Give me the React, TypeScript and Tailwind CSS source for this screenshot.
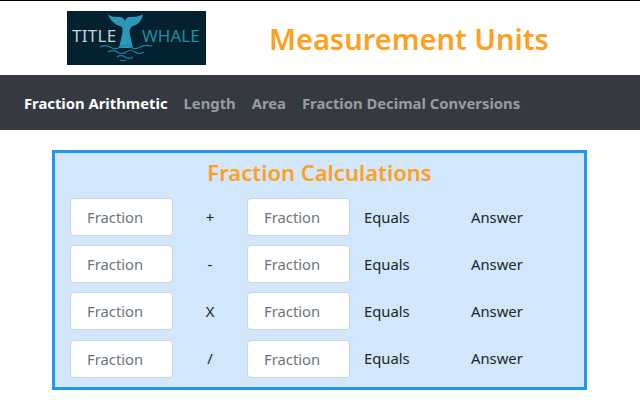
const font = { fontFamily: '"Noto Sans", "Open Sans", sans-serif' };

const rows = ["+", "-", "X", "/"];

function Logo() {
  return (
    <div className="relative w-[139px] h-[54px] bg-[#04212f] overflow-hidden">
      <svg viewBox="0 0 139 54" className="absolute inset-0 w-full h-full">
        <path
          d="M41 3c2 6 6 10 12 12 3 1 3 5 2 9l-3 13h14l-3-13c-1-4 0-8 3-9 6-2 9-6 10-12-4 3-10 3-14 3-2 0-3 2-4 4-1-2-3-4-5-4-5 0-9 0-12-3z"
          fill="#2a9ab8"
        />
        <path
          d="M33 36c4-2 7-2 10 0s7 2 10 0 7-2 10 0 7 2 10 0 7-2 12-1M41 41c4-2 6-2 9 0s6 2 9 0 6-2 9 0 6 2 9 0M50 46c3-2 5-2 8 0s5 2 8 0M53 49c2 1 4 1 6 0"
          stroke="#1b87a6"
          strokeWidth="1.2"
          fill="none"
        />
      </svg>
      <span className="absolute left-[5px] top-[13px] text-[17px] leading-[24px] text-[#c9d2d6] tracking-[0.3px]">
        TITLE
      </span>
      <span className="absolute left-[75px] top-[13px] text-[17px] leading-[24px] text-[#1f8ea3]">
        WHALE
      </span>
    </div>
  );
}

function Field() {
  return (
    <input
      placeholder="Fraction"
      className="w-[103px] h-[38px] shrink-0 bg-white rounded border border-[#ced4da] px-4 text-[14.8px] placeholder:text-[#6c757d] outline-none"
    />
  );
}

export default function App() {
  return (
    <div style={font} className="w-[640px] h-[400px] overflow-hidden bg-white border-t border-black">
      <header className="h-[74px] flex items-center pl-[67px]">
        <Logo />
        <h1 className="ml-[63px] text-[29px] font-semibold text-[#ffa01e] leading-none">
          Measurement Units
        </h1>
      </header>
      <nav className="h-[55px] pt-px bg-[#343a40] flex items-center pl-6 gap-4 text-[14.8px] font-bold text-[#9a9da0]">
        <span className="text-white">Fraction Arithmetic</span>
        <span>Length</span>
        <span>Area</span>
        <span>Fraction Decimal Conversions</span>
      </nav>
      <section className="w-[535px] h-[240px] mt-5 ml-[52px] border-[3px] border-[#2196f3] bg-[#d2e7fb] px-[15px]">
        <h2 className="text-center text-[22px] leading-[38px] font-semibold text-[#ffa01e]">
          Fraction Calculations
        </h2>
        <div className="flex flex-col gap-[9.2px] mt-[7px]">
          {rows.map((op) => (
            <div key={op} className="flex items-center text-[14.8px] text-[#212529]">
              <Field />
              <span className="w-[74px] text-center">{op}</span>
              <Field />
              <span className="ml-[14px] w-[107px]">Equals</span>
              <span>Answer</span>
            </div>
          ))}
        </div>
      </section>
    </div>
  );
}
